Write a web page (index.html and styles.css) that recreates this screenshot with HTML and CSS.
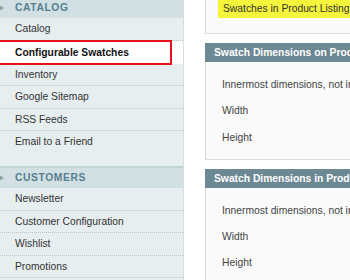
FILE: index.html
```html
<!DOCTYPE html>
<html lang="en">
<head>
    <meta charset="UTF-8">
    <title>Configuration</title>
    <link rel="stylesheet" href="styles.css">
</head>
<body>
    <div class="page">
        <ul class="side-nav">
            <li class="nav-title"><span class="arrow"></span>Catalog</li>
            <li class="nav-item">Catalog</li>
            <li class="nav-item active">Configurable Swatches<span class="highlight"></span></li>
            <li class="nav-item">Inventory</li>
            <li class="nav-item">Google Sitemap</li>
            <li class="nav-item">RSS Feeds</li>
            <li class="nav-item last">Email to a Friend</li>
            <li class="nav-title spaced"><span class="arrow"></span>Customers</li>
            <li class="nav-item">Newsletter</li>
            <li class="nav-item">Customer Configuration</li>
            <li class="nav-item">Wishlist</li>
            <li class="nav-item">Promotions</li>
        </ul>

        <div class="main">
            <div class="fieldset top">
                <span class="note">Swatches in Product Listing</span>
            </div>

            <div class="section-head">Swatch Dimensions on Product Page</div>
            <div class="fieldset">
                <p class="row">Innermost dimensions, not including borders</p>
                <p class="row">Width</p>
                <p class="row">Height</p>
            </div>

            <div class="section-head">Swatch Dimensions in Product Listing</div>
            <div class="fieldset">
                <p class="row">Innermost dimensions, not including borders</p>
                <p class="row">Width</p>
                <p class="row">Height</p>
            </div>
        </div>
    </div>
</body>
</html>
```

FILE: styles.css
```css
/* General reset */
* {
    margin: 0;
    padding: 0;
    box-sizing: border-box;
}

body {
    font-family: Arial, "Liberation Sans", sans-serif;
    font-size: 10.3px;
    color: #333;
    background-color: #fff;
    overflow: hidden;
}

.page {
    display: flex;
    width: 100%;
    height: 280px;
    overflow: hidden;
}

/* Left navigation */
.side-nav {
    list-style: none;
    width: 184px;
    flex-shrink: 0;
    background-color: #e7eef0;
    border-right: 1px solid #d3dfe2;
}

.nav-title {
    position: relative;
    height: 18px;
    line-height: 16px;
    padding-left: 15px;
    background-color: #d3e0e3;
    color: #55808e;
    font-weight: bold;
    text-transform: uppercase;
    letter-spacing: 0.6px;
}

.nav-title.spaced {
    margin-top: 12px;
    height: 22px;
    line-height: 20px;
    border-top: 2px solid #c3d2d6;
}

.arrow {
    position: absolute;
    left: -1px;
    top: 5px;
    border-left: 5px solid #8aa4ad;
    border-top: 3px solid transparent;
    border-bottom: 3px solid transparent;
}

.nav-title.spaced .arrow {
    top: 7px;
}

.nav-item {
    position: relative;
    height: 22.6px;
    line-height: 21px;
    padding-left: 15px;
    border-bottom: 1px dotted #b9c4c7;
}

.nav-item.last {
    border-bottom: none;
}

.nav-item.active {
    height: 23px;
    line-height: 23px;
    background-color: #fff;
    font-weight: bold;
    color: #111;
    border-bottom: none;
}

/* red annotation frame */
.highlight {
    position: absolute;
    left: -3px;
    top: -1px;
    width: 175px;
    height: 25px;
    border: 2px solid #e8101a;
}

/* Content */
.main {
    flex: 1;
    min-width: 0;
    margin-left: 21px;
    white-space: nowrap;
}

.fieldset {
    width: 400px;
    background-color: #fafafa;
    border: 1px solid #dcdcdc;
    border-top: none;
    padding: 14px 16px 4px;
}

.fieldset.top {
    height: 34px;
    padding: 0 0 0 12px;
    margin-bottom: 9px;
}

.note {
    display: inline-block;
    background-color: #f5f53c;
    padding: 3px 6px 4px 5px;
    font-size: 10.3px;
    color: #333;
}

.section-head {
    width: 400px;
    height: 19px;
    line-height: 19px;
    padding-left: 9px;
    background-color: #6c8893;
    color: #fff;
    font-weight: bold;
}

.row {
    height: 26.3px;
    line-height: 18px;
    color: #444;
    font-size: 10.3px;
}

.fieldset + .section-head {
    margin-top: 9px;
}
```
